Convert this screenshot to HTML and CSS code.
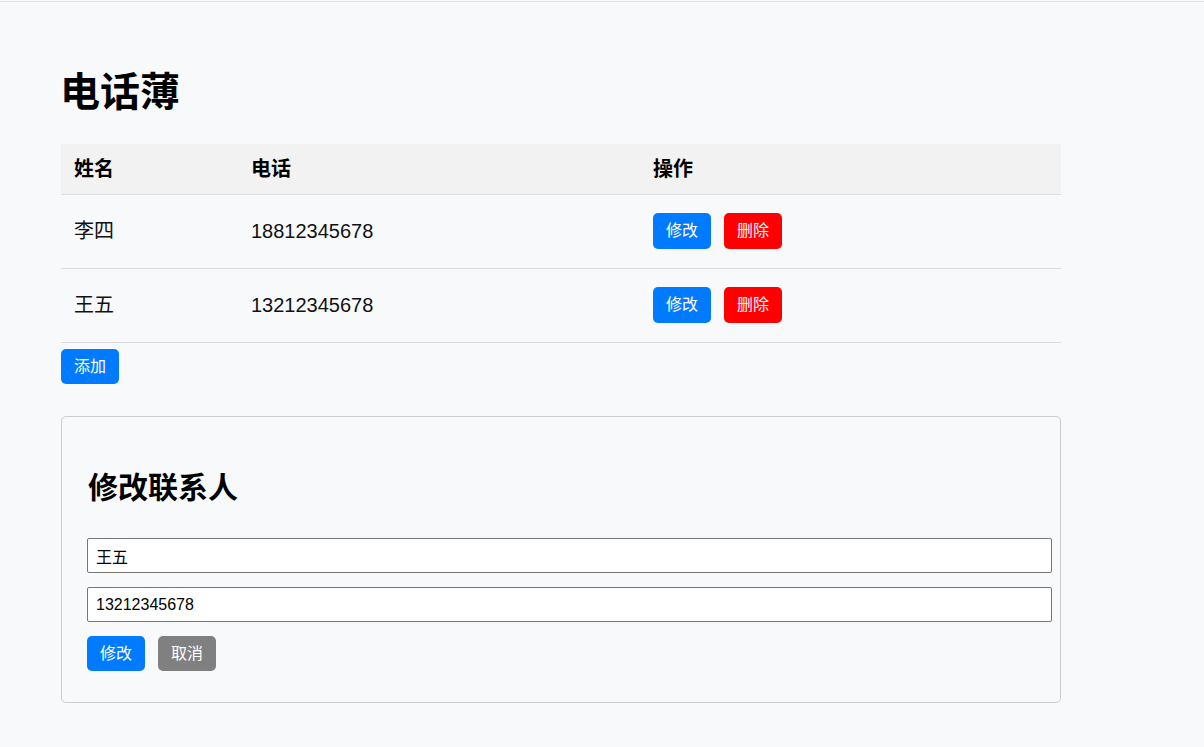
FILE: index.html
```html
<!DOCTYPE html>
<html lang="zh-CN">
<head>
<meta charset="utf-8">
<title>电话薄</title>
<link rel="stylesheet" href="styles.css">
</head>
<body>
<div class="container">
  <h1 class="title">电话薄</h1>
  <table class="book">
    <thead>
      <tr>
        <th class="col-name">姓名</th>
        <th class="col-phone">电话</th>
        <th class="col-ops">操作</th>
      </tr>
    </thead>
    <tbody>
      <tr>
        <td>李四</td>
        <td>18812345678</td>
        <td><div class="ops"><button class="btn btn-blue">修改</button><button class="btn btn-red">删除</button></div></td>
      </tr>
      <tr>
        <td>王五</td>
        <td>13212345678</td>
        <td><div class="ops"><button class="btn btn-blue">修改</button><button class="btn btn-red">删除</button></div></td>
      </tr>
    </tbody>
  </table>
  <button class="btn btn-blue add">添加</button>
  <div class="card">
    <h2 class="card-title">修改联系人</h2>
    <input class="field" type="text" value="王五">
    <input class="field" type="text" value="13212345678">
    <div class="ops form-ops"><button class="btn btn-blue">修改</button><button class="btn btn-gray">取消</button></div>
  </div>
</div>
</body>
</html>
```

FILE: styles.css
```css
html {
  background: #f8f9fa;
}
body {
  margin: 1px 0 0 0;
  border-top: 1px solid #e4e4e4;
  font-family: "Liberation Sans", "Noto Sans CJK SC", sans-serif;
  font-size: 20px;
  color: #000;
}
.container {
  width: 1000px;
  margin-left: 61px;
  padding-top: 64px;
}
.title {
  margin: 0 0 26px -1px;
  font-size: 40px;
  line-height: 52px;
  font-weight: bold;
}
.book {
  width: 1000px;
  border-collapse: collapse;
}
.book th {
  background: #f2f2f2;
  text-align: left;
  font-weight: bold;
  font-size: 20px;
  line-height: 24px;
  padding: 13px 12px;
  border-bottom: 1px solid #dddddd;
}
.book th:first-child,
.book td:first-child {
  padding-left: 13px;
}
.col-name { width: 178px; box-sizing: border-box; }
.col-phone { width: 402px; box-sizing: border-box; }
.col-ops { width: 420px; box-sizing: border-box; }
.book td {
  font-size: 20px;
  line-height: 24px;
  padding: 18px 12px 19px 12px;
  border-bottom: 1px solid #dddddd;
  vertical-align: middle;
  color: #111;
}
.ops {
  display: flex;
  gap: 13px;
}
.btn {
  box-sizing: border-box;
  height: 36px;
  padding: 0 13px;
  border: none;
  border-radius: 5px;
  color: #fff;
  font-family: "Liberation Sans", "Noto Sans CJK SC", sans-serif;
  font-size: 16px;
  line-height: 36px;
  cursor: pointer;
}
.btn-blue { background: #007bff; }
.btn-red { background: #ff0000; }
.btn-gray { background: #808080; }
.add {
  display: block;
  height: 35px;
  line-height: 35px;
  margin-top: 6px;
}
.card {
  margin-top: 32px;
  border: 1px solid #cccccc;
  border-radius: 5px;
  padding: 25px 25px 31px 25px;
}
.card-title {
  margin: 25px 0 29px 1px;
  font-size: 30px;
  line-height: 42px;
  font-weight: bold;
}
.field {
  display: block;
  box-sizing: border-box;
  width: 965px;
  height: 35px;
  margin: 0 0 14px 0;
  padding: 0 8px;
  border: 1px solid #767676;
  border-radius: 2px;
  background: #fff;
  font-family: "Liberation Sans", "Noto Sans CJK SC", sans-serif;
  font-size: 16px;
  color: #000;
}
.form-ops .btn {
  height: 35px;
  line-height: 35px;
}
```
